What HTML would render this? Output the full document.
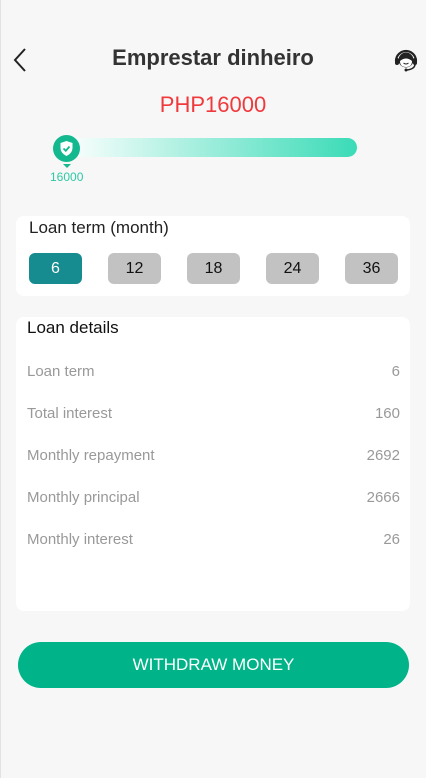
<!DOCTYPE html>
<html><head><meta charset="utf-8"><style>
*{margin:0;padding:0;box-sizing:border-box}
body{width:426px;height:778px;background:#f7f7f7;font-family:"Liberation Sans",sans-serif;position:relative;overflow:hidden}
.abs{position:absolute}
.title{left:0;right:0;top:45px;text-align:center;font-size:22px;font-weight:bold;color:#333}
.amt{left:0;right:0;top:92px;text-align:center;font-size:22px;color:#f0393c}
.bar{left:62px;top:138px;width:295px;height:19px;border-radius:10px;background:linear-gradient(90deg,#fff,#3adbb7)}
.knob{left:53px;top:135px;width:27px;height:27px;border-radius:50%;background:#13b88f}
.card{left:16px;width:394px;background:#fff;border-radius:8px}
.btn{top:253px;width:53px;height:31px;border-radius:6px;background:#c2c2c2;text-align:center;line-height:31px;font-size:16px;color:#111}
.row{left:27px;right:26px;font-size:15px;color:#999;display:flex;justify-content:space-between}
</style></head><body>
<div class="abs" style="left:0;top:0;width:1px;height:778px;background:#e2e2e2"></div>
<svg class="abs" style="left:12px;top:47px" width="16" height="26" viewBox="0 0 16 26"><path d="M13 2 L3 13 L13 24" fill="none" stroke="#222" stroke-width="2"/></svg>
<div class="abs title">Emprestar dinheiro</div>
<svg class="abs" style="left:393px;top:47px" width="26" height="26" viewBox="0 0 26 26"><path d="M3 14a10 10 0 0 1 20 0" fill="none" stroke="#222" stroke-width="2.2"/><rect x="2" y="11" width="4" height="7" rx="2" fill="#222"/><rect x="20" y="11" width="4" height="7" rx="2" fill="#222"/><circle cx="13" cy="13" r="7.5" fill="#222"/><path d="M7 14q6-5 12 0q0 6-6 6q-6 0-6-6z" fill="#fff"/><path d="M10.5 16q2.5 2 5 0" stroke="#222" fill="none"/><path d="M22 17q0 5-8 6" stroke="#222" fill="none" stroke-width="1.5"/><circle cx="13" cy="23" r="1.5" fill="#222"/></svg>
<div class="abs amt">PHP16000</div>
<div class="abs bar"></div>
<div class="abs knob"></div>
<svg class="abs" style="left:59px;top:140px" width="15" height="17" viewBox="0 0 15 17"><path d="M7.5 1 L13.5 3 V8 Q13.5 13 7.5 16 Q1.5 13 1.5 8 V3Z" fill="#fff"/><path d="M4.5 8.5 L6.8 10.8 L10.5 6.5" stroke="#13b88f" stroke-width="1.8" fill="none"/></svg>
<div class="abs" style="left:63px;top:164px;width:0;height:0;border-left:4px solid transparent;border-right:4px solid transparent;border-top:4px solid #19b88f"></div>
<div class="abs" style="left:50px;top:170px;font-size:12px;color:#2ec9a4">16000</div>
<div class="abs card" style="top:216px;height:80px"></div>
<div class="abs" style="left:29px;top:218px;font-size:17px;color:#222">Loan term (month)</div>
<div class="abs btn" style="left:29px;background:#168c91;color:#fff">6</div>
<div class="abs btn" style="left:108px">12</div>
<div class="abs btn" style="left:187px">18</div>
<div class="abs btn" style="left:266px">24</div>
<div class="abs btn" style="left:345px">36</div>
<div class="abs card" style="top:317px;height:294px"></div>
<div class="abs" style="left:27px;top:318px;font-size:17px;color:#111">Loan details</div>
<div class="abs row" style="top:363px"><span>Loan term</span><span>6</span></div>
<div class="abs row" style="top:405px"><span>Total interest</span><span>160</span></div>
<div class="abs row" style="top:447px"><span>Monthly repayment</span><span>2692</span></div>
<div class="abs row" style="top:489px"><span>Monthly principal</span><span>2666</span></div>
<div class="abs row" style="top:531px"><span>Monthly interest</span><span>26</span></div>
<div class="abs" style="left:18px;top:642px;width:391px;height:46px;border-radius:23px;background:#00b388;color:#fff;text-align:center;line-height:46px;font-size:17px">WITHDRAW MONEY</div>
</body></html>
